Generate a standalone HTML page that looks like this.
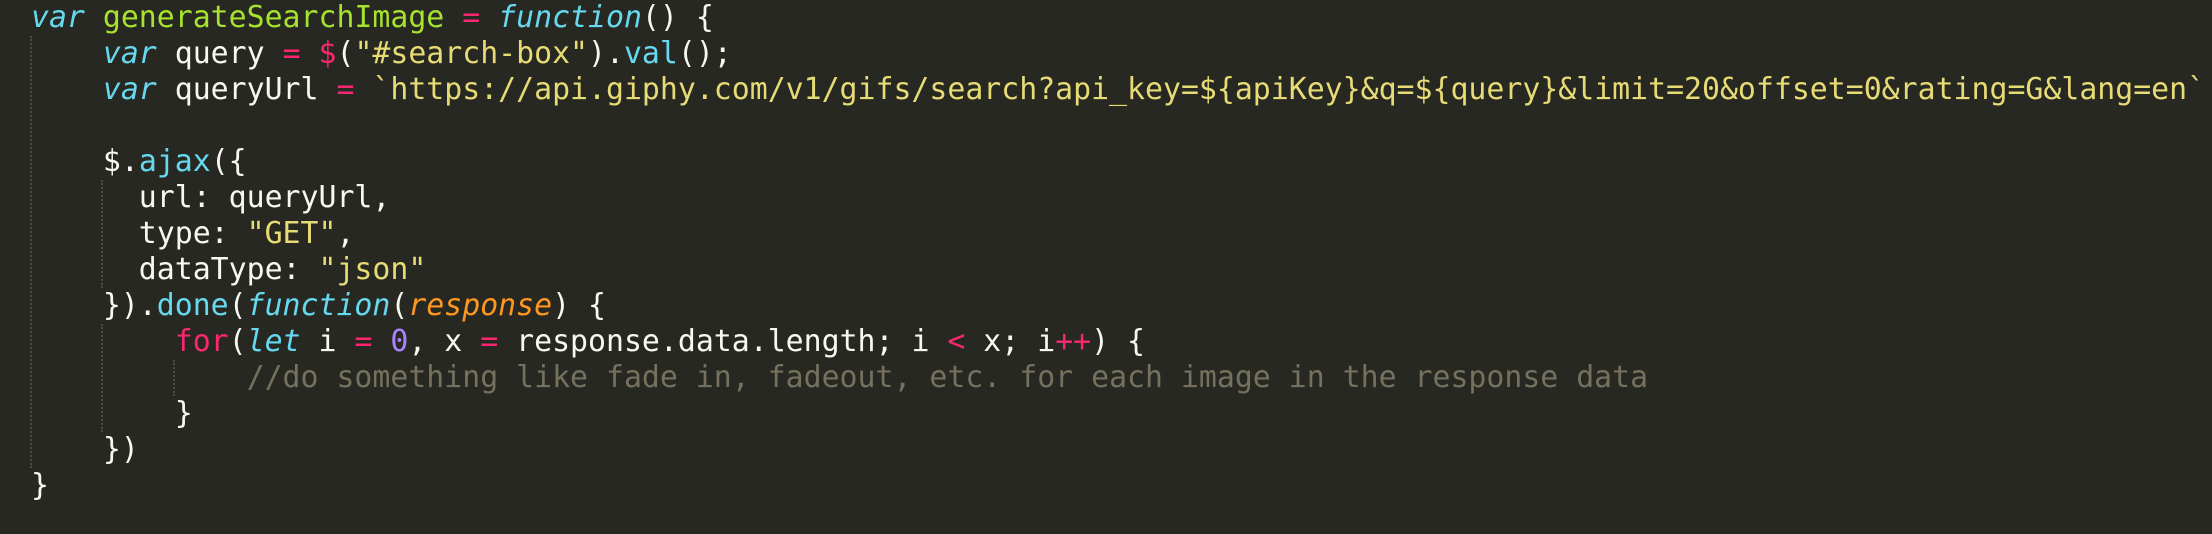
<!DOCTYPE html>
<html><head><meta charset="utf-8"><style>
html,body{margin:0;padding:0;background:#272822;width:2212px;height:534px;overflow:hidden}
pre{margin:0;position:absolute;left:31px;top:0;font-family:"DejaVu Sans Mono","Liberation Mono",monospace;font-size:29.85px;line-height:36px;color:#f8f8f2;white-space:pre}
.k{color:#66d9ef;font-style:italic}.g{color:#a6e22e}.p{color:#f92672}.c{color:#66d9ef}.s{color:#e6db74}.o{color:#fd971f;font-style:italic}.n{color:#ae81ff}.cm{color:#75715e}
.gd{position:absolute;width:0;border-left:2px dotted #4a4b43}
</style></head><body>
<div class="gd" style="left:30px;top:36px;height:432px"></div>
<div class="gd" style="left:101px;top:180px;height:108px"></div>
<div class="gd" style="left:101px;top:324px;height:108px"></div>
<div class="gd" style="left:173px;top:360px;height:36px"></div>
<pre><span class="k">var</span> <span class="g">generateSearchImage</span> <span class="p">=</span> <span class="k">function</span>() {
    <span class="k">var</span> query <span class="p">=</span> <span class="p">$</span>(<span class="s">"#search-box"</span>).<span class="c">val</span>();
    <span class="k">var</span> queryUrl <span class="p">=</span> <span class="s">`https://api.giphy.com/v1/gifs/search?api_key=${apiKey}&amp;q=${query}&amp;limit=20&amp;offset=0&amp;rating=G&amp;lang=en`</span>

    $.<span class="c">ajax</span>({
      url: queryUrl,
      type: <span class="s">"GET"</span>,
      dataType: <span class="s">"json"</span>
    }).<span class="c">done</span>(<span class="k">function</span>(<span class="o">response</span>) {
        <span class="p">for</span>(<span class="k">let</span> i <span class="p">=</span> <span class="n">0</span>, x <span class="p">=</span> response.data.length; i <span class="p">&lt;</span> x; i<span class="p">++</span>) {
            <span class="cm">//do something like fade in, fadeout, etc. for each image in the response data</span>
        }
    })
}</pre>
</body></html>
